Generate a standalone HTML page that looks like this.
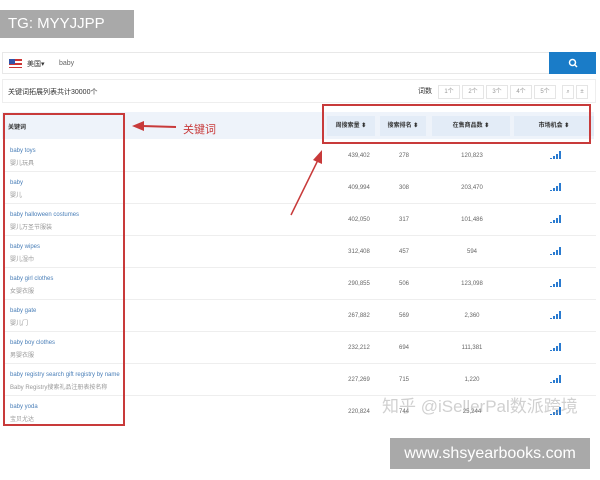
<!DOCTYPE html><html><head><meta charset="utf-8"><style>
*{margin:0;padding:0;box-sizing:border-box}
body{width:600px;height:480px;background:#fff;position:relative;overflow:hidden;font-family:"Liberation Sans","Noto Sans CJK SC",sans-serif;color:#555}
.a{position:absolute}
.tg{left:0;top:10px;width:134px;height:28px;background:#a9a9a9;color:#fff;font-size:15px;line-height:28px;padding-left:8px}
.www{left:390px;top:438px;width:200px;height:31px;background:#a9a9a9;color:#fff;font-size:16px;line-height:31px;text-align:center}
.bar{left:2px;top:52px;width:594px;height:22px;border:1px solid #e8e8e8;background:#fff}
.btn{left:549px;top:52px;width:47px;height:22px;background:#1a7cc8}
.bar2{left:2px;top:79px;width:594px;height:24px;border:1px solid #eee;background:#fff;font-size:7px}
.hdr{left:2px;top:112px;width:592px;height:27px;background:#eef3fa}
.row{left:2px;width:592px;height:32px;border-bottom:1px solid #eee;font-size:6px}
.k{position:absolute;left:6px;top:8px;color:#4a7fb8;white-space:nowrap}
.c{position:absolute;left:6px;top:18px;color:#999;white-space:nowrap}
.n{position:absolute;top:13px;transform:translateX(-50%);color:#666}
.sig{position:absolute;left:546px;top:10px;width:12px;height:9px}
.pg{display:inline-block;width:22px;height:14px;border:1px solid #e5e5e5;text-align:center;line-height:13px;color:#999;font-size:6px;margin-left:2px}
.hc{position:absolute;top:4px;height:20px;background:#e3ecf7;font-size:6px;color:#333;font-weight:bold;line-height:20px;text-align:center}
</style></head><body>
<div class="a tg">TG: MYYJJPP</div>
<div class="a bar"><div class="a" style="left:6px;top:6px;width:13px;height:9px;background:repeating-linear-gradient(#c33 0 2px,#fff 2px 4px)"></div><div class="a" style="left:6px;top:6px;width:6px;height:5px;background:#35a"></div><span class="a" style="left:24px;top:6px;font-size:7px;color:#333">美国▾</span><span class="a" style="left:56px;top:7px;font-size:7px;color:#666">baby</span></div>
<div class="a btn"><svg class="a" style="left:19px;top:6px" width="10" height="10"><circle cx="4.5" cy="4.5" r="3" stroke="#fff" stroke-width="1.5" fill="none"/><path d="M7 7l2 2" stroke="#fff" stroke-width="1.5"/></svg></div>
<div class="a bar2"><span class="a" style="left:5px;top:7px;color:#333">关键词拓展列表共计30000个</span><span class="a" style="left:415px;top:5px"><span style="color:#333;margin-right:4px">词数</span><span class="pg">1个</span><span class="pg">2个</span><span class="pg">3个</span><span class="pg">4个</span><span class="pg">5个</span><span class="pg" style="width:12px;margin-left:6px">⌕</span><span class="pg" style="width:12px">±</span></span></div>
<div class="a hdr"><span class="a" style="left:6px;top:10px;font-size:6px;color:#333;font-weight:bold">关键词</span>
<div class="hc" style="left:325px;width:48px">周搜索量 ⬍</div><div class="hc" style="left:378px;width:46px">搜索排名 ⬍</div><div class="hc" style="left:430px;width:78px">在售商品数 ⬍</div><div class="hc" style="left:512px;width:80px">市场机会 ⬍</div></div>
<div class="a" style="left:2px;top:140px">
<div class="a row" style="top:0;position:absolute"><span class="k">baby toys</span><span class="c">婴儿玩具</span><span class="n" style="left:355px">439,402</span><span class="n" style="left:400px">278</span><span class="n" style="left:468px">120,823</span><svg class="sig" viewBox="0 0 12 9"><path d="M0 8h2v1H0zM3 6h2v3H3zM6 4h2v5H6zM9 1h2v8H9z" fill="#2a7bd0"/></svg></div>
<div class="a row" style="top:32px"><span class="k">baby</span><span class="c">婴儿</span><span class="n" style="left:355px">409,994</span><span class="n" style="left:400px">308</span><span class="n" style="left:468px">203,470</span><svg class="sig" viewBox="0 0 12 9"><path d="M0 8h2v1H0zM3 6h2v3H3zM6 4h2v5H6zM9 1h2v8H9z" fill="#2a7bd0"/></svg></div>
<div class="a row" style="top:64px"><span class="k">baby halloween costumes</span><span class="c">婴儿万圣节服装</span><span class="n" style="left:355px">402,050</span><span class="n" style="left:400px">317</span><span class="n" style="left:468px">101,486</span><svg class="sig" viewBox="0 0 12 9"><path d="M0 8h2v1H0zM3 6h2v3H3zM6 4h2v5H6zM9 1h2v8H9z" fill="#2a7bd0"/></svg></div>
<div class="a row" style="top:96px"><span class="k">baby wipes</span><span class="c">婴儿湿巾</span><span class="n" style="left:355px">312,408</span><span class="n" style="left:400px">457</span><span class="n" style="left:468px">594</span><svg class="sig" viewBox="0 0 12 9"><path d="M0 8h2v1H0zM3 6h2v3H3zM6 4h2v5H6zM9 1h2v8H9z" fill="#2a7bd0"/></svg></div>
<div class="a row" style="top:128px"><span class="k">baby girl clothes</span><span class="c">女婴衣服</span><span class="n" style="left:355px">290,855</span><span class="n" style="left:400px">506</span><span class="n" style="left:468px">123,098</span><svg class="sig" viewBox="0 0 12 9"><path d="M0 8h2v1H0zM3 6h2v3H3zM6 4h2v5H6zM9 1h2v8H9z" fill="#2a7bd0"/></svg></div>
<div class="a row" style="top:160px"><span class="k">baby gate</span><span class="c">婴儿门</span><span class="n" style="left:355px">267,882</span><span class="n" style="left:400px">569</span><span class="n" style="left:468px">2,360</span><svg class="sig" viewBox="0 0 12 9"><path d="M0 8h2v1H0zM3 6h2v3H3zM6 4h2v5H6zM9 1h2v8H9z" fill="#2a7bd0"/></svg></div>
<div class="a row" style="top:192px"><span class="k">baby boy clothes</span><span class="c">男婴衣服</span><span class="n" style="left:355px">232,212</span><span class="n" style="left:400px">694</span><span class="n" style="left:468px">111,381</span><svg class="sig" viewBox="0 0 12 9"><path d="M0 8h2v1H0zM3 6h2v3H3zM6 4h2v5H6zM9 1h2v8H9z" fill="#2a7bd0"/></svg></div>
<div class="a row" style="top:224px"><span class="k">baby registry search gift registry by name</span><span class="c">Baby Registry搜索礼品注册表按名称</span><span class="n" style="left:355px">227,269</span><span class="n" style="left:400px">715</span><span class="n" style="left:468px">1,220</span><svg class="sig" viewBox="0 0 12 9"><path d="M0 8h2v1H0zM3 6h2v3H3zM6 4h2v5H6zM9 1h2v8H9z" fill="#2a7bd0"/></svg></div>
<div class="a row" style="top:256px;border:none"><span class="k">baby yoda</span><span class="c">宝贝尤达</span><span class="n" style="left:355px">220,824</span><span class="n" style="left:400px">744</span><span class="n" style="left:468px">25,244</span><svg class="sig" viewBox="0 0 12 9"><path d="M0 8h2v1H0zM3 6h2v3H3zM6 4h2v5H6zM9 1h2v8H9z" fill="#2a7bd0"/></svg></div>
</div>
<div class="a" style="left:3px;top:113px;width:122px;height:313px;border:2px solid #c83a3a"></div>
<div class="a" style="left:322px;top:104px;width:269px;height:40px;border:2px solid #c83a3a"></div>
<span class="a" style="left:183px;top:121px;font-size:11px;color:#c83a3a">关键词</span>
<svg class="a" style="left:0;top:0" width="600" height="480"><path d="M176 127 L142 126" stroke="#c83a3a" stroke-width="2"/><path d="M132 126 L144 121 L144 131Z" fill="#c83a3a"/><path d="M291 215 L318 160" stroke="#c83a3a" stroke-width="1.5"/><path d="M322 150 L322 164 L313 160Z" fill="#c83a3a"/></svg>
<span class="a" style="left:382px;top:392px;font-size:17px;color:rgba(170,170,170,.55);white-space:nowrap">知乎 @iSellerPal数派跨境</span>
<div class="a www">www.shsyearbooks.com</div>
</body></html>
